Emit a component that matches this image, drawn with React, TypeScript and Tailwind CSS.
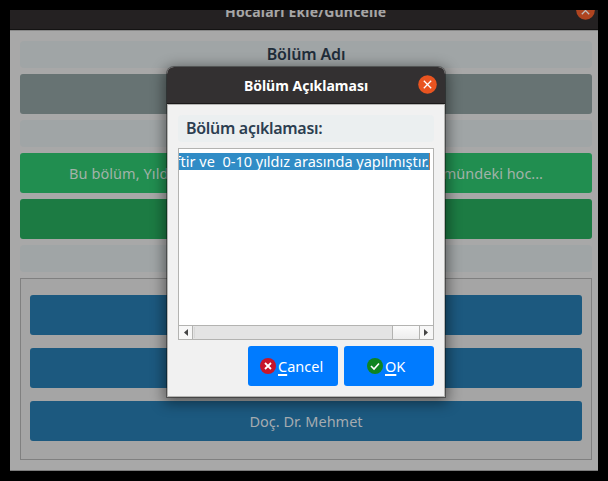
import { ReactNode } from "react";

function Strip({ children }: { children?: ReactNode }) {
  return (
    <div className="flex h-[27px] shrink-0 items-center justify-center rounded-[4px] bg-[#a0a5a6] text-[16px] font-semibold text-[#1f2d3a]">
      {children}
    </div>
  );
}

function CloseIcon() {
  return (
    <svg className="block size-[19px]" viewBox="0 0 19 19">
      <circle cx="9.5" cy="9.5" r="9.3" fill="#e95420" />
      <path d="M5.8 5.8l7.4 7.4M13.2 5.8l-7.4 7.4" stroke="#fff" strokeWidth="1.3" />
    </svg>
  );
}

function LecturerButton({ children }: { children?: ReactNode }) {
  return (
    <div className="flex h-10 shrink-0 items-center justify-center rounded-[3px] bg-[#1c597f] pt-[2px] text-[14.5px] text-[#a5abb0]">
      {children}
    </div>
  );
}

function MainWindow() {
  return (
    <div className="flex h-[461px] w-[588px] flex-col overflow-hidden border-b border-[#7c7c7c] bg-[#a8a8a8]">
      <div className="relative h-5 shrink-0 border-b border-[#141313] bg-[#242122]">
        <div className="absolute top-[-8px] left-[215px] text-[14px] leading-[20px] font-bold whitespace-nowrap text-[#a7a6a6]">
          <span className="tracking-[0.19px]">Hocaları Ekle/Güncelle</span>
        </div>
        <div className="absolute top-[-9px] left-[565.5px] opacity-70">
          <CloseIcon />
        </div>
      </div>
      <div className="flex flex-1 flex-col gap-1.5 border-t border-[#888] pt-[10px] pr-1.5 pl-[10px]">
        <Strip>
          <span className="pb-[2px] tracking-[-0.15px]">Bölüm Adı</span>
        </Strip>
        <div className="h-10 shrink-0 rounded-[3px] bg-[#677373]" />
        <Strip />
        <div className="flex h-10 shrink-0 items-center justify-between rounded-[3px] bg-[#218e50] pt-[2px] pr-[49px] pl-[49px] text-[14.5px] text-[#a1b3a9]">
          <span className="tracking-[0.08px]">Bu bölüm, Yıldız</span>
          <span>bölümündeki hoc...</span>
        </div>
        <div className="h-10 shrink-0 rounded-[3px] bg-[#1c7b43]" />
        <Strip />
        <div className="flex h-[182px] shrink-0 flex-col gap-[13px] border border-[#808080] bg-[#a5a5a5] px-[9px] pt-4">
          <LecturerButton />
          <LecturerButton />
          <LecturerButton>Doç. Dr. Mehmet</LecturerButton>
        </div>
      </div>
    </div>
  );
}

function TextArea() {
  return (
    <div className="mt-1.5 flex h-[192px] flex-col border border-[#b3b3b1] bg-white">
      <div className="mt-1 flex h-[17px] w-[251px] justify-end overflow-hidden border-r border-[#b47850] bg-[#308cc6] text-[14.5px] leading-[17px] whitespace-pre text-white">
        <span>ftir ve  0-10 yıldız arasında yapılmıştır.</span>
      </div>
      <div className="mt-auto flex h-[14px] border-t border-[#b3b3b1] bg-[#e4e4e4]">
        <div className="flex w-[14px] items-center justify-center border-r border-[#b3b3b1] bg-[#f7f7f7]">
          <svg className="h-[7px] w-1" viewBox="0 0 4 7">
            <path d="M4 0v7L0 3.5z" fill="#444" />
          </svg>
        </div>
        <div className="my-[1px] ml-[1px] w-px bg-[#d8d8d8]" />
        <div className="flex-1" />
        <div className="w-[28px] border-x border-[#b3b3b1] bg-linear-to-b from-[#fbfbfb] to-[#ededed]" />
        <div className="flex w-[13px] items-center justify-center bg-[#f7f7f7] pr-[1px]">
          <svg className="h-[7px] w-1" viewBox="0 0 4 7">
            <path d="M0 0v7l4-3.5z" fill="#444" />
          </svg>
        </div>
      </div>
    </div>
  );
}

function Dialog() {
  return (
    <div className="absolute top-[67px] left-[167px] flex h-[330px] w-[278px] flex-col overflow-hidden rounded-t-[7px] bg-[#f1f1f1] shadow-[0_0_0_1px_rgba(0,0,0,0.35),0_3px_14px_3px_rgba(0,0,0,0.45)]">
      <div className="relative flex h-[37px] shrink-0 items-center justify-center border-b border-[#1b1919] bg-[#333031] text-[14px] font-bold text-white">
        <span>Bölüm Açıklaması</span>
        <div className="absolute top-[8px] right-[8.5px]">
          <CloseIcon />
        </div>
      </div>
      <div className="flex flex-1 flex-col border border-[#b5b5b3] px-[10px] pt-[10px]">
        <div className="flex h-[27px] items-center rounded-[4px] bg-[#ebeff0] pb-[1px] pl-2 text-[16px] font-semibold text-[#2c3e50]">
          <span className="tracking-[-0.3px]">Bölüm açıklaması:</span>
        </div>
        <TextArea />
        <div className="mt-1.5 flex justify-end gap-1.5 text-[14.5px] text-white">
          <div className="flex h-10 w-[90px] items-center rounded-[3px] bg-[#007bff] pl-3">
            <svg className="size-4" viewBox="0 0 16 16">
              <circle cx="8" cy="8" r="8" fill="#c7162b" />
              <path d="M5 5l6 6M11 5l-6 6" stroke="#fff" strokeWidth="1.8" />
            </svg>
            <span className="ml-[2px] pt-[2px]">
              <u className="decoration-2 underline-offset-[2px] [text-decoration-skip-ink:none]">C</u>ancel
            </span>
          </div>
          <div className="flex h-10 w-[90px] items-center rounded-[3px] bg-[#007bff] pl-[23px]">
            <svg className="size-4" viewBox="0 0 16 16">
              <circle cx="8" cy="8" r="8" fill="#0e8420" />
              <path d="M4 8l3 3 5-5.5" fill="none" stroke="#fff" strokeWidth="1.6" />
            </svg>
            <span className="ml-[2px] pt-[2px]">
              <u className="decoration-2 underline-offset-[2px] [text-decoration-skip-ink:none]">O</u>K
            </span>
          </div>
        </div>
      </div>
    </div>
  );
}

export default function App() {
  return (
    <div className="relative h-[481px] w-[608px] overflow-hidden bg-black p-[10px] font-['Noto_Sans',sans-serif]">
      <MainWindow />
      <Dialog />
    </div>
  );
}
